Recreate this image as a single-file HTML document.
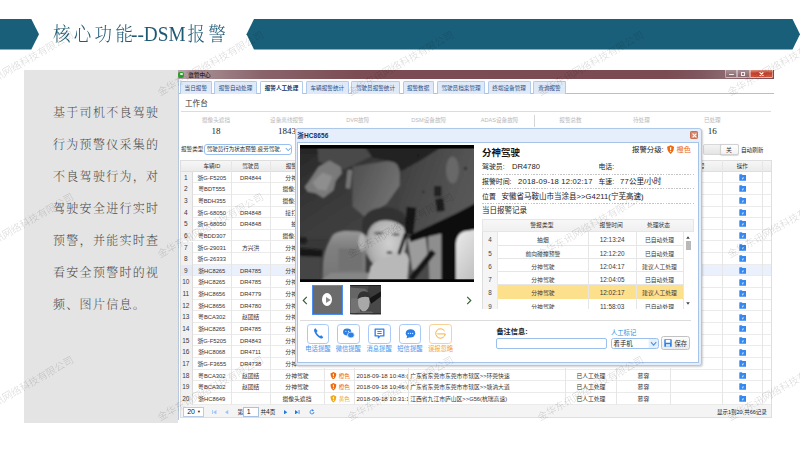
<!DOCTYPE html>
<html lang="zh-CN"><head><meta charset="utf-8"><title>核心功能--DSM报警</title>
<style>
html,body{margin:0;padding:0;background:#fff;}
body{width:800px;height:450px;overflow:hidden;}
#slide{position:relative;width:800px;height:450px;overflow:hidden;background:#fff;font-family:"Liberation Sans","Noto Sans CJK SC",sans-serif;}
#slide div,#slide span,#slide svg{position:absolute;box-sizing:border-box;}
.t{white-space:nowrap;line-height:1;}
.c{text-align:center;}
.ser{font-family:"Liberation Serif","Noto Serif CJK SC",serif;}
.tab{top:81px;height:12.6px;background:#dfe9f7;border:0.6px solid #b3cbeb;border-bottom:none;border-radius:1.5px 1.5px 0 0;color:#2b4f86;font-size:5.6px;line-height:12px;text-align:center;white-space:nowrap;}
.tab.on{background:#fff;color:#16305e;font-weight:bold;height:13.2px;}
.sl{top:116.5px;font-size:5.6px;color:#b9b9b9;width:60px;text-align:center;white-space:nowrap;line-height:6px;}
.sv{top:126.6px;font-size:9px;color:#1a1a1a;width:60px;text-align:center;white-space:nowrap;line-height:9px;font-family:"Liberation Serif",serif;}
.row{left:180px;width:591.7px;height:11.65px;border-bottom:0.6px solid #ebebeb;background:#fff;}
.row.hl{background:#eaf1fc;}
.cell{top:0;height:11.65px;line-height:13.2px;font-size:5.8px;color:#333;text-align:center;white-space:nowrap;overflow:hidden;}
.num{left:0;width:12.6px;background:#f1f1f1;border-right:0.6px solid #dcdcdc;font-size:6.5px;color:#3a3a3a;line-height:12.8px;}
.vl{top:159.6px;width:0.6px;height:245px;background:#e6e6e6;}
.dot{left:482px;width:211.6px;height:1px;background:repeating-linear-gradient(to right,#c6c6c6 0,#c6c6c6 1.5px,transparent 1.5px,transparent 2.7px);}
.dt{font-size:7.4px;color:#222;white-space:nowrap;line-height:8px;}
.r2{left:482px;width:199.8px;height:13.25px;border-bottom:0.6px solid #e6e6e6;background:#fff;}
.r2 .cell{height:13.25px;line-height:16.2px;font-size:5.8px;color:#3a3a3a;}
.btn{top:324.2px;width:22.6px;height:19.6px;border:1.1px solid #a9c9f8;border-radius:3.2px;background:#fff;}
.bl{top:344.5px;width:34px;text-align:center;font-size:6.3px;line-height:7px;color:#3f8fe8;white-space:nowrap;}
.wm{font-size:10px;font-weight:300;color:#000;opacity:0.17;white-space:nowrap;line-height:1;transform-origin:0 100%;transform:rotate(-29.5deg);letter-spacing:0;}
</style></head><body><div id="slide">

<svg style="left:0;top:0" width="800" height="60" viewBox="0 0 800 60"><polygon points="0,19 31.3,19 39,34.2 31.3,49.4 0,49.4" fill="#1a5f7a"/><polygon points="246.5,34.2 254,19 792.5,19 800,34.2 792.5,49.4 254,49.4" fill="#1a5f7a"/></svg>
<div class="t ser" style="left:53px;top:22.8px;font-size:17.5px;letter-spacing:3.3px;color:#1f5a75;line-height:24px;font-weight:300;transform:scaleY(1.12);transform-origin:0 50%;">核心功能<span style="position:static;display:inline-block;font-size:19.3px;letter-spacing:0;margin-left:-5.2px;margin-right:1.4px;font-weight:400;">--DSM</span><span style="position:static;font-size:2px;letter-spacing:0;"> </span>报警</div>
<div style="left:24.4px;top:70px;width:154px;height:353.4px;background:#e4e4e4"></div>
<div class="t ser" style="left:53px;top:105.8px;font-size:12px;letter-spacing:1.3px;color:#4c4c4c;line-height:14px;font-weight:300;">基于司机不良驾驶</div>
<div class="t ser" style="left:53px;top:137.8px;font-size:12px;letter-spacing:1.3px;color:#4c4c4c;line-height:14px;font-weight:300;">行为预警仪采集的</div>
<div class="t ser" style="left:53px;top:169.8px;font-size:12px;letter-spacing:1.3px;color:#4c4c4c;line-height:14px;font-weight:300;">不良驾驶行为，对</div>
<div class="t ser" style="left:53px;top:201.8px;font-size:12px;letter-spacing:1.3px;color:#4c4c4c;line-height:14px;font-weight:300;">驾驶安全进行实时</div>
<div class="t ser" style="left:53px;top:233.8px;font-size:12px;letter-spacing:1.3px;color:#4c4c4c;line-height:14px;font-weight:300;">预警，并能实时查</div>
<div class="t ser" style="left:53px;top:265.8px;font-size:12px;letter-spacing:1.3px;color:#4c4c4c;line-height:14px;font-weight:300;">看安全预警时的视</div>
<div class="t ser" style="left:53px;top:297.8px;font-size:12px;letter-spacing:1.3px;color:#4c4c4c;line-height:14px;font-weight:300;">频、图片信息。</div>
<div id="win" style="left:177.5px;top:70.4px;width:596.2px;height:349.6px;background:#fff;border-left:0.6px solid #b8c8dc;"></div>
<div style="left:177.5px;top:70.4px;width:596.2px;height:8.8px;background:linear-gradient(to right,#b8a6aa 0,#a88f95 3%,#8a646b 14%,#7b4c53 30%,#7a4b52 82%,#805860 88%,#8a676e 91.6%,#7a4b52 100%);"></div>
<div style="left:178.4px;top:71.6px;width:6px;height:6px;border-radius:2px;background:#2aa12a;"></div><div style="left:179.6px;top:72.8px;width:3.4px;height:2.6px;border-radius:1px;background:#eaf6ea;"></div>
<div class="t" style="left:188.3px;top:72px;font-size:5.6px;color:#000;line-height:6px;">监管中心</div>
<div style="left:724.5px;top:70.4px;width:12.6px;height:7.8px;background:linear-gradient(#a98f95,#8b666e);border:0.5px solid rgba(255,255,255,0.4);border-top:none;border-radius:0 0 0 1.5px;"></div>
<div style="left:737.3px;top:70.4px;width:12.4px;height:7.8px;background:linear-gradient(#a98f95,#8b666e);border:0.5px solid rgba(255,255,255,0.4);border-top:none;"></div>
<div style="left:749.8px;top:70.4px;width:23.4px;height:7.8px;background:linear-gradient(#dc9382,#c5402c 45%,#d4553c);border:0.5px solid rgba(255,255,255,0.45);border-top:none;border-radius:0 0 1.5px 0;"></div>
<div style="left:728.5px;top:73.8px;width:5px;height:1.7px;background:#f1ecec;border-radius:0.5px;"></div>
<div style="left:741px;top:71.6px;width:4px;height:4px;border:0.9px solid #f1ecec;"></div>
<svg style="left:758.6px;top:71.6px" width="5" height="4.4" viewBox="0 0 5 4.4"><path d="M0.6 0.4 L4.4 4 M4.4 0.4 L0.6 4" stroke="#fff" stroke-width="1.2"/></svg>
<div style="left:178px;top:93.3px;width:595.6px;height:0.7px;background:#a6c2e6;"></div>
<div class="tab" style="left:180.0px;width:31.6px;">当日报警</div>
<div class="tab" style="left:214.0px;width:43.0px;">报警自动处理</div>
<div class="tab on" style="left:260.0px;width:43.0px;">报警人工处理</div>
<div class="tab" style="left:306.0px;width:42.6px;">车辆报警统计</div>
<div class="tab" style="left:351.4px;width:48.2px;">驾驶员报警统计</div>
<div class="tab" style="left:402.6px;width:31.0px;">报警数据</div>
<div class="tab" style="left:437.0px;width:48.0px;">驾驶员档案管理</div>
<div class="tab" style="left:487.6px;width:43.0px;">终端设备管理</div>
<div class="tab" style="left:533.4px;width:32.2px;">查询报警</div>
<div class="t" style="left:185px;top:100px;font-size:7.6px;color:#333;line-height:8px;">工作台</div>
<div style="left:181px;top:111px;width:590px;height:0.7px;background:#dcdcdc;"></div>
<div class="sl" style="left:186.0px;">摄像头遮挡</div><div class="sv" style="left:186.0px;">18</div>
<div class="sl" style="left:256.9px;">设备离线报警</div><div class="sv" style="left:256.9px;">1843</div>
<div class="sl" style="left:327.8px;">DVR故障</div><div class="sv" style="left:327.8px;">0</div>
<div class="sl" style="left:398.7px;">DSM设备故障</div><div class="sv" style="left:398.7px;">0</div>
<div class="sl" style="left:469.6px;">ADAS设备故障</div><div class="sv" style="left:469.6px;">0</div>
<div class="sl" style="left:540.5px;">报警总数</div><div class="sv" style="left:540.5px;">1861</div>
<div class="sl" style="left:611.4px;">待处理</div><div class="sv" style="left:611.4px;">2</div>
<div class="sl" style="left:682.3px;">已处理</div><div class="sv" style="left:682.3px;">16</div>
<div style="left:534.4px;top:115px;width:0.7px;height:12px;background:#d6d6d6;"></div>
<div class="t" style="left:181px;top:146.3px;font-size:5.6px;color:#333;line-height:6px;">报警类型</div>
<div style="left:204.4px;top:144.2px;width:88px;height:10.5px;border:0.7px solid #9cc0ee;border-radius:3px;background:#fff;"></div>
<div class="t" style="left:206.8px;top:146.3px;font-size:5.5px;color:#222;line-height:6px;">驾驶员行为状态预警,疲劳驾驶,</div>
<svg style="left:285.2px;top:147px" width="6.4" height="5.4" viewBox="0 0 6 5"><path d="M0.8 1 L3 3.4 L5.2 1" fill="none" stroke="#4a90e2" stroke-width="0.9"/></svg>
<div style="left:702.5px;top:144.2px;width:36px;height:11.2px;border:0.6px solid #d8d8d8;border-radius:2px;background:linear-gradient(#f4f4f4,#e4e4e4);"></div>
<div class="t c" style="left:719.5px;top:144.2px;width:19px;height:11.2px;border:0.6px solid #d2d2d2;border-radius:2px;background:linear-gradient(#fff,#f2f2f2);font-size:5.8px;line-height:10.6px;color:#333;box-shadow:0 0.5px 1px rgba(0,0,0,0.15);">关</div>
<div class="t" style="left:741px;top:147px;font-size:5.6px;color:#222;line-height:6px;">自动刷新</div>
<div style="left:180px;top:159.6px;width:591.7px;height:12px;background:linear-gradient(#f6f6f6,#ebebeb);border:0.6px solid #dedede;"></div>
<div class="t c" style="left:192.6px;top:162.6px;width:38.4px;font-size:5.6px;line-height:6px;color:#333;">车辆ID</div>
<div class="t c" style="left:231.0px;top:162.6px;width:39.2px;font-size:5.6px;line-height:6px;color:#333;">驾驶员</div>
<div class="t c" style="left:270.2px;top:162.6px;width:53.5px;font-size:5.6px;line-height:6px;color:#333;">报警类型</div>
<div class="t c" style="left:323.7px;top:162.6px;width:30.4px;font-size:5.6px;line-height:6px;color:#333;">报警分级</div>
<div class="t c" style="left:354.1px;top:162.6px;width:53.6px;font-size:5.6px;line-height:6px;color:#333;">报警时间</div>
<div class="t c" style="left:407.7px;top:162.6px;width:157.7px;font-size:5.6px;line-height:6px;color:#333;">位置</div>
<div class="t c" style="left:565.4px;top:162.6px;width:51.0px;font-size:5.6px;line-height:6px;color:#333;">处理状态</div>
<div class="t c" style="left:616.4px;top:162.6px;width:54.0px;font-size:5.6px;line-height:6px;color:#333;">处理人</div>
<div class="t c" style="left:670.4px;top:162.6px;width:51.9px;font-size:5.6px;line-height:6px;color:#333;">流水号</div>
<div class="t c" style="left:722.3px;top:162.6px;width:40.0px;font-size:5.6px;line-height:6px;color:#333;">操作</div>
<div class="row" style="top:171.60px;">
<div class="cell num">1</div>
<div class="cell" style="left:12.6px;width:38.4px;">浙G-F5205</div>
<div class="cell" style="left:51.0px;width:39.2px;">DR4844</div>
<div class="cell" style="left:90.2px;width:53.5px;">分神驾驶</div>
<div class="cell" style="left:143.7px;width:30.4px;color:#ee6a10;text-align:left;padding-left:15px;font-size:5.6px;"><svg style="left:6.3px;top:2.1px" width="6.8" height="7.6" viewBox="0 0 12 15"><path d="M6 0.2 L11.8 2.8 L11.2 7.6 C10.4 11 8.4 13.4 6 14.9 C3.6 13.4 1.6 11 0.8 7.6 L0.2 2.8 Z" fill="#ee6a10"/><rect x="5" y="3.2" width="2" height="5.2" rx="1" fill="#fff"/><circle cx="6" cy="10.6" r="1.1" fill="#fff"/></svg>橙色</div>
<div class="cell" style="left:174.1px;width:53.6px;text-align:left;padding-left:2.4px;font-size:6.1px;line-height:11.4px;">2018-09-18 12:04:17</div>
<div class="cell" style="left:227.7px;width:157.7px;text-align:left;padding-left:2.5px;">安徽省马鞍山市当涂县>>G4211(宁芜高速)</div>
<div class="cell" style="left:385.4px;width:51.0px;">已自动处理</div>
<div class="cell" style="left:436.4px;width:54.0px;"></div>
<svg style="left:558.7px;top:2.2px" width="7.6" height="7" viewBox="0 0 14 13"><path d="M0.5 1.5 Q0.5 0.5 1.5 0.5 H5 L6.5 2 H12.5 Q13.5 2 13.5 3 V11.5 Q13.5 12.5 12.5 12.5 H1.5 Q0.5 12.5 0.5 11.5 Z" fill="#3588f0"/><path d="M5 9.5 L7.5 5.5 L9 7 L7 10 Z" fill="#cfe3fb"/></svg>
</div>
<div class="row" style="top:183.25px;">
<div class="cell num">2</div>
<div class="cell" style="left:12.6px;width:38.4px;">粤BDT555</div>
<div class="cell" style="left:51.0px;width:39.2px;"></div>
<div class="cell" style="left:90.2px;width:53.5px;">摄像头遮挡</div>
<div class="cell" style="left:143.7px;width:30.4px;color:#f0a818;text-align:left;padding-left:15px;font-size:5.6px;"><svg style="left:6.3px;top:2.1px" width="6.8" height="7.6" viewBox="0 0 12 15"><path d="M6 0.2 L11.8 2.8 L11.2 7.6 C10.4 11 8.4 13.4 6 14.9 C3.6 13.4 1.6 11 0.8 7.6 L0.2 2.8 Z" fill="#f0a818"/><rect x="5" y="3.2" width="2" height="5.2" rx="1" fill="#fff"/><circle cx="6" cy="10.6" r="1.1" fill="#fff"/></svg>黄色</div>
<div class="cell" style="left:174.1px;width:53.6px;text-align:left;padding-left:2.4px;font-size:6.1px;line-height:11.4px;">2018-09-18 12:03:51</div>
<div class="cell" style="left:227.7px;width:157.7px;text-align:left;padding-left:2.5px;">广东省东莞市东莞市市辖区>>莞长路</div>
<div class="cell" style="left:385.4px;width:51.0px;">已自动处理</div>
<div class="cell" style="left:436.4px;width:54.0px;"></div>
<svg style="left:558.7px;top:2.2px" width="7.6" height="7" viewBox="0 0 14 13"><path d="M0.5 1.5 Q0.5 0.5 1.5 0.5 H5 L6.5 2 H12.5 Q13.5 2 13.5 3 V11.5 Q13.5 12.5 12.5 12.5 H1.5 Q0.5 12.5 0.5 11.5 Z" fill="#3588f0"/><path d="M5 9.5 L7.5 5.5 L9 7 L7 10 Z" fill="#cfe3fb"/></svg>
</div>
<div class="row" style="top:194.90px;">
<div class="cell num">3</div>
<div class="cell" style="left:12.6px;width:38.4px;">粤BDH355</div>
<div class="cell" style="left:51.0px;width:39.2px;"></div>
<div class="cell" style="left:90.2px;width:53.5px;">摄像头遮挡</div>
<div class="cell" style="left:143.7px;width:30.4px;color:#f0a818;text-align:left;padding-left:15px;font-size:5.6px;"><svg style="left:6.3px;top:2.1px" width="6.8" height="7.6" viewBox="0 0 12 15"><path d="M6 0.2 L11.8 2.8 L11.2 7.6 C10.4 11 8.4 13.4 6 14.9 C3.6 13.4 1.6 11 0.8 7.6 L0.2 2.8 Z" fill="#f0a818"/><rect x="5" y="3.2" width="2" height="5.2" rx="1" fill="#fff"/><circle cx="6" cy="10.6" r="1.1" fill="#fff"/></svg>黄色</div>
<div class="cell" style="left:174.1px;width:53.6px;text-align:left;padding-left:2.4px;font-size:6.1px;line-height:11.4px;">2018-09-18 12:03:20</div>
<div class="cell" style="left:227.7px;width:157.7px;text-align:left;padding-left:2.5px;">广东省东莞市东莞市市辖区>>东部快速</div>
<div class="cell" style="left:385.4px;width:51.0px;">已自动处理</div>
<div class="cell" style="left:436.4px;width:54.0px;"></div>
<svg style="left:558.7px;top:2.2px" width="7.6" height="7" viewBox="0 0 14 13"><path d="M0.5 1.5 Q0.5 0.5 1.5 0.5 H5 L6.5 2 H12.5 Q13.5 2 13.5 3 V11.5 Q13.5 12.5 12.5 12.5 H1.5 Q0.5 12.5 0.5 11.5 Z" fill="#3588f0"/><path d="M5 9.5 L7.5 5.5 L9 7 L7 10 Z" fill="#cfe3fb"/></svg>
</div>
<div class="row" style="top:206.55px;">
<div class="cell num">4</div>
<div class="cell" style="left:12.6px;width:38.4px;">浙G-68050</div>
<div class="cell" style="left:51.0px;width:39.2px;">DR4848</div>
<div class="cell" style="left:90.2px;width:53.5px;">接打电话</div>
<div class="cell" style="left:143.7px;width:30.4px;color:#ee6a10;text-align:left;padding-left:15px;font-size:5.6px;"><svg style="left:6.3px;top:2.1px" width="6.8" height="7.6" viewBox="0 0 12 15"><path d="M6 0.2 L11.8 2.8 L11.2 7.6 C10.4 11 8.4 13.4 6 14.9 C3.6 13.4 1.6 11 0.8 7.6 L0.2 2.8 Z" fill="#ee6a10"/><rect x="5" y="3.2" width="2" height="5.2" rx="1" fill="#fff"/><circle cx="6" cy="10.6" r="1.1" fill="#fff"/></svg>橙色</div>
<div class="cell" style="left:174.1px;width:53.6px;text-align:left;padding-left:2.4px;font-size:6.1px;line-height:11.4px;">2018-09-18 12:02:59</div>
<div class="cell" style="left:227.7px;width:157.7px;text-align:left;padding-left:2.5px;">浙江省金华市婺城区>>G60(沪昆高速)</div>
<div class="cell" style="left:385.4px;width:51.0px;">已自动处理</div>
<div class="cell" style="left:436.4px;width:54.0px;"></div>
<svg style="left:558.7px;top:2.2px" width="7.6" height="7" viewBox="0 0 14 13"><path d="M0.5 1.5 Q0.5 0.5 1.5 0.5 H5 L6.5 2 H12.5 Q13.5 2 13.5 3 V11.5 Q13.5 12.5 12.5 12.5 H1.5 Q0.5 12.5 0.5 11.5 Z" fill="#3588f0"/><path d="M5 9.5 L7.5 5.5 L9 7 L7 10 Z" fill="#cfe3fb"/></svg>
</div>
<div class="row" style="top:218.20px;">
<div class="cell num">5</div>
<div class="cell" style="left:12.6px;width:38.4px;">浙G-68050</div>
<div class="cell" style="left:51.0px;width:39.2px;">DR4848</div>
<div class="cell" style="left:90.2px;width:53.5px;">抽烟</div>
<div class="cell" style="left:143.7px;width:30.4px;color:#f0a818;text-align:left;padding-left:15px;font-size:5.6px;"><svg style="left:6.3px;top:2.1px" width="6.8" height="7.6" viewBox="0 0 12 15"><path d="M6 0.2 L11.8 2.8 L11.2 7.6 C10.4 11 8.4 13.4 6 14.9 C3.6 13.4 1.6 11 0.8 7.6 L0.2 2.8 Z" fill="#f0a818"/><rect x="5" y="3.2" width="2" height="5.2" rx="1" fill="#fff"/><circle cx="6" cy="10.6" r="1.1" fill="#fff"/></svg>黄色</div>
<div class="cell" style="left:174.1px;width:53.6px;text-align:left;padding-left:2.4px;font-size:6.1px;line-height:11.4px;">2018-09-18 12:02:40</div>
<div class="cell" style="left:227.7px;width:157.7px;text-align:left;padding-left:2.5px;">浙江省金华市婺城区>>G60(沪昆高速)</div>
<div class="cell" style="left:385.4px;width:51.0px;">已自动处理</div>
<div class="cell" style="left:436.4px;width:54.0px;"></div>
<svg style="left:558.7px;top:2.2px" width="7.6" height="7" viewBox="0 0 14 13"><path d="M0.5 1.5 Q0.5 0.5 1.5 0.5 H5 L6.5 2 H12.5 Q13.5 2 13.5 3 V11.5 Q13.5 12.5 12.5 12.5 H1.5 Q0.5 12.5 0.5 11.5 Z" fill="#3588f0"/><path d="M5 9.5 L7.5 5.5 L9 7 L7 10 Z" fill="#cfe3fb"/></svg>
</div>
<div class="row" style="top:229.85px;">
<div class="cell num">6</div>
<div class="cell" style="left:12.6px;width:38.4px;">粤BDD307</div>
<div class="cell" style="left:51.0px;width:39.2px;"></div>
<div class="cell" style="left:90.2px;width:53.5px;">摄像头遮挡</div>
<div class="cell" style="left:143.7px;width:30.4px;color:#f0a818;text-align:left;padding-left:15px;font-size:5.6px;"><svg style="left:6.3px;top:2.1px" width="6.8" height="7.6" viewBox="0 0 12 15"><path d="M6 0.2 L11.8 2.8 L11.2 7.6 C10.4 11 8.4 13.4 6 14.9 C3.6 13.4 1.6 11 0.8 7.6 L0.2 2.8 Z" fill="#f0a818"/><rect x="5" y="3.2" width="2" height="5.2" rx="1" fill="#fff"/><circle cx="6" cy="10.6" r="1.1" fill="#fff"/></svg>黄色</div>
<div class="cell" style="left:174.1px;width:53.6px;text-align:left;padding-left:2.4px;font-size:6.1px;line-height:11.4px;">2018-09-18 12:02:31</div>
<div class="cell" style="left:227.7px;width:157.7px;text-align:left;padding-left:2.5px;">广东省东莞市东莞市市辖区>>松山湖大道</div>
<div class="cell" style="left:385.4px;width:51.0px;">已自动处理</div>
<div class="cell" style="left:436.4px;width:54.0px;"></div>
<svg style="left:558.7px;top:2.2px" width="7.6" height="7" viewBox="0 0 14 13"><path d="M0.5 1.5 Q0.5 0.5 1.5 0.5 H5 L6.5 2 H12.5 Q13.5 2 13.5 3 V11.5 Q13.5 12.5 12.5 12.5 H1.5 Q0.5 12.5 0.5 11.5 Z" fill="#3588f0"/><path d="M5 9.5 L7.5 5.5 L9 7 L7 10 Z" fill="#cfe3fb"/></svg>
</div>
<div class="row" style="top:241.50px;">
<div class="cell num">7</div>
<div class="cell" style="left:12.6px;width:38.4px;">浙G-29031</div>
<div class="cell" style="left:51.0px;width:39.2px;">方兴洪</div>
<div class="cell" style="left:90.2px;width:53.5px;">分神驾驶</div>
<div class="cell" style="left:143.7px;width:30.4px;color:#ee6a10;text-align:left;padding-left:15px;font-size:5.6px;"><svg style="left:6.3px;top:2.1px" width="6.8" height="7.6" viewBox="0 0 12 15"><path d="M6 0.2 L11.8 2.8 L11.2 7.6 C10.4 11 8.4 13.4 6 14.9 C3.6 13.4 1.6 11 0.8 7.6 L0.2 2.8 Z" fill="#ee6a10"/><rect x="5" y="3.2" width="2" height="5.2" rx="1" fill="#fff"/><circle cx="6" cy="10.6" r="1.1" fill="#fff"/></svg>橙色</div>
<div class="cell" style="left:174.1px;width:53.6px;text-align:left;padding-left:2.4px;font-size:6.1px;line-height:11.4px;">2018-09-18 12:02:25</div>
<div class="cell" style="left:227.7px;width:157.7px;text-align:left;padding-left:2.5px;">浙江省金华市金东区>>G60(沪昆高速)</div>
<div class="cell" style="left:385.4px;width:51.0px;">已自动处理</div>
<div class="cell" style="left:436.4px;width:54.0px;"></div>
<svg style="left:558.7px;top:2.2px" width="7.6" height="7" viewBox="0 0 14 13"><path d="M0.5 1.5 Q0.5 0.5 1.5 0.5 H5 L6.5 2 H12.5 Q13.5 2 13.5 3 V11.5 Q13.5 12.5 12.5 12.5 H1.5 Q0.5 12.5 0.5 11.5 Z" fill="#3588f0"/><path d="M5 9.5 L7.5 5.5 L9 7 L7 10 Z" fill="#cfe3fb"/></svg>
</div>
<div class="row" style="top:253.15px;">
<div class="cell num">8</div>
<div class="cell" style="left:12.6px;width:38.4px;">浙G-26333</div>
<div class="cell" style="left:51.0px;width:39.2px;"></div>
<div class="cell" style="left:90.2px;width:53.5px;">分神驾驶</div>
<div class="cell" style="left:143.7px;width:30.4px;color:#ee6a10;text-align:left;padding-left:15px;font-size:5.6px;"><svg style="left:6.3px;top:2.1px" width="6.8" height="7.6" viewBox="0 0 12 15"><path d="M6 0.2 L11.8 2.8 L11.2 7.6 C10.4 11 8.4 13.4 6 14.9 C3.6 13.4 1.6 11 0.8 7.6 L0.2 2.8 Z" fill="#ee6a10"/><rect x="5" y="3.2" width="2" height="5.2" rx="1" fill="#fff"/><circle cx="6" cy="10.6" r="1.1" fill="#fff"/></svg>橙色</div>
<div class="cell" style="left:174.1px;width:53.6px;text-align:left;padding-left:2.4px;font-size:6.1px;line-height:11.4px;">2018-09-18 12:02:20</div>
<div class="cell" style="left:227.7px;width:157.7px;text-align:left;padding-left:2.5px;">浙江省金华市义乌市>>G60(沪昆高速)</div>
<div class="cell" style="left:385.4px;width:51.0px;">已自动处理</div>
<div class="cell" style="left:436.4px;width:54.0px;"></div>
<svg style="left:558.7px;top:2.2px" width="7.6" height="7" viewBox="0 0 14 13"><path d="M0.5 1.5 Q0.5 0.5 1.5 0.5 H5 L6.5 2 H12.5 Q13.5 2 13.5 3 V11.5 Q13.5 12.5 12.5 12.5 H1.5 Q0.5 12.5 0.5 11.5 Z" fill="#3588f0"/><path d="M5 9.5 L7.5 5.5 L9 7 L7 10 Z" fill="#cfe3fb"/></svg>
</div>
<div class="row hl" style="top:264.80px;">
<div class="cell num" style="background:#e3eaf5">9</div>
<div class="cell" style="left:12.6px;width:38.4px;">浙HC8265</div>
<div class="cell" style="left:51.0px;width:39.2px;">DR4785</div>
<div class="cell" style="left:90.2px;width:53.5px;">分神驾驶</div>
<div class="cell" style="left:143.7px;width:30.4px;color:#ee6a10;text-align:left;padding-left:15px;font-size:5.6px;"><svg style="left:6.3px;top:2.1px" width="6.8" height="7.6" viewBox="0 0 12 15"><path d="M6 0.2 L11.8 2.8 L11.2 7.6 C10.4 11 8.4 13.4 6 14.9 C3.6 13.4 1.6 11 0.8 7.6 L0.2 2.8 Z" fill="#ee6a10"/><rect x="5" y="3.2" width="2" height="5.2" rx="1" fill="#fff"/><circle cx="6" cy="10.6" r="1.1" fill="#fff"/></svg>橙色</div>
<div class="cell" style="left:174.1px;width:53.6px;text-align:left;padding-left:2.4px;font-size:6.1px;line-height:11.4px;">2018-09-18 12:02:18</div>
<div class="cell" style="left:227.7px;width:157.7px;text-align:left;padding-left:2.5px;">安徽省芜湖市芜湖县>>G4211(宁芜高速)</div>
<div class="cell" style="left:385.4px;width:51.0px;">建议人工处理</div>
<div class="cell" style="left:436.4px;width:54.0px;"></div>
<svg style="left:558.7px;top:2.2px" width="7.6" height="7" viewBox="0 0 14 13"><path d="M0.5 1.5 Q0.5 0.5 1.5 0.5 H5 L6.5 2 H12.5 Q13.5 2 13.5 3 V11.5 Q13.5 12.5 12.5 12.5 H1.5 Q0.5 12.5 0.5 11.5 Z" fill="#3588f0"/><path d="M5 9.5 L7.5 5.5 L9 7 L7 10 Z" fill="#cfe3fb"/></svg>
</div>
<div class="row" style="top:276.45px;">
<div class="cell num">10</div>
<div class="cell" style="left:12.6px;width:38.4px;">浙HC8265</div>
<div class="cell" style="left:51.0px;width:39.2px;">DR4785</div>
<div class="cell" style="left:90.2px;width:53.5px;">分神驾驶</div>
<div class="cell" style="left:143.7px;width:30.4px;color:#ee6a10;text-align:left;padding-left:15px;font-size:5.6px;"><svg style="left:6.3px;top:2.1px" width="6.8" height="7.6" viewBox="0 0 12 15"><path d="M6 0.2 L11.8 2.8 L11.2 7.6 C10.4 11 8.4 13.4 6 14.9 C3.6 13.4 1.6 11 0.8 7.6 L0.2 2.8 Z" fill="#ee6a10"/><rect x="5" y="3.2" width="2" height="5.2" rx="1" fill="#fff"/><circle cx="6" cy="10.6" r="1.1" fill="#fff"/></svg>橙色</div>
<div class="cell" style="left:174.1px;width:53.6px;text-align:left;padding-left:2.4px;font-size:6.1px;line-height:11.4px;">2018-09-18 12:02:17</div>
<div class="cell" style="left:227.7px;width:157.7px;text-align:left;padding-left:2.5px;">安徽省芜湖市芜湖县>>G4211(宁芜高速)</div>
<div class="cell" style="left:385.4px;width:51.0px;">已自动处理</div>
<div class="cell" style="left:436.4px;width:54.0px;"></div>
<svg style="left:558.7px;top:2.2px" width="7.6" height="7" viewBox="0 0 14 13"><path d="M0.5 1.5 Q0.5 0.5 1.5 0.5 H5 L6.5 2 H12.5 Q13.5 2 13.5 3 V11.5 Q13.5 12.5 12.5 12.5 H1.5 Q0.5 12.5 0.5 11.5 Z" fill="#3588f0"/><path d="M5 9.5 L7.5 5.5 L9 7 L7 10 Z" fill="#cfe3fb"/></svg>
</div>
<div class="row" style="top:288.10px;">
<div class="cell num">11</div>
<div class="cell" style="left:12.6px;width:38.4px;">浙HC8656</div>
<div class="cell" style="left:51.0px;width:39.2px;">DR4779</div>
<div class="cell" style="left:90.2px;width:53.5px;">分神驾驶</div>
<div class="cell" style="left:143.7px;width:30.4px;color:#ee6a10;text-align:left;padding-left:15px;font-size:5.6px;"><svg style="left:6.3px;top:2.1px" width="6.8" height="7.6" viewBox="0 0 12 15"><path d="M6 0.2 L11.8 2.8 L11.2 7.6 C10.4 11 8.4 13.4 6 14.9 C3.6 13.4 1.6 11 0.8 7.6 L0.2 2.8 Z" fill="#ee6a10"/><rect x="5" y="3.2" width="2" height="5.2" rx="1" fill="#fff"/><circle cx="6" cy="10.6" r="1.1" fill="#fff"/></svg>橙色</div>
<div class="cell" style="left:174.1px;width:53.6px;text-align:left;padding-left:2.4px;font-size:6.1px;line-height:11.4px;">2018-09-18 12:02:17</div>
<div class="cell" style="left:227.7px;width:157.7px;text-align:left;padding-left:2.5px;">安徽省马鞍山市当涂县>>G4211(宁芜高速)</div>
<div class="cell" style="left:385.4px;width:51.0px;">建议人工处理</div>
<div class="cell" style="left:436.4px;width:54.0px;"></div>
<svg style="left:558.7px;top:2.2px" width="7.6" height="7" viewBox="0 0 14 13"><path d="M0.5 1.5 Q0.5 0.5 1.5 0.5 H5 L6.5 2 H12.5 Q13.5 2 13.5 3 V11.5 Q13.5 12.5 12.5 12.5 H1.5 Q0.5 12.5 0.5 11.5 Z" fill="#3588f0"/><path d="M5 9.5 L7.5 5.5 L9 7 L7 10 Z" fill="#cfe3fb"/></svg>
</div>
<div class="row" style="top:299.75px;">
<div class="cell num">12</div>
<div class="cell" style="left:12.6px;width:38.4px;">浙HC8656</div>
<div class="cell" style="left:51.0px;width:39.2px;">DR4780</div>
<div class="cell" style="left:90.2px;width:53.5px;">分神驾驶</div>
<div class="cell" style="left:143.7px;width:30.4px;color:#ee6a10;text-align:left;padding-left:15px;font-size:5.6px;"><svg style="left:6.3px;top:2.1px" width="6.8" height="7.6" viewBox="0 0 12 15"><path d="M6 0.2 L11.8 2.8 L11.2 7.6 C10.4 11 8.4 13.4 6 14.9 C3.6 13.4 1.6 11 0.8 7.6 L0.2 2.8 Z" fill="#ee6a10"/><rect x="5" y="3.2" width="2" height="5.2" rx="1" fill="#fff"/><circle cx="6" cy="10.6" r="1.1" fill="#fff"/></svg>橙色</div>
<div class="cell" style="left:174.1px;width:53.6px;text-align:left;padding-left:2.4px;font-size:6.1px;line-height:11.4px;">2018-09-18 12:02:17</div>
<div class="cell" style="left:227.7px;width:157.7px;text-align:left;padding-left:2.5px;">安徽省马鞍山市当涂县>>G4211(宁芜高速)</div>
<div class="cell" style="left:385.4px;width:51.0px;">建议人工处理</div>
<div class="cell" style="left:436.4px;width:54.0px;"></div>
<svg style="left:558.7px;top:2.2px" width="7.6" height="7" viewBox="0 0 14 13"><path d="M0.5 1.5 Q0.5 0.5 1.5 0.5 H5 L6.5 2 H12.5 Q13.5 2 13.5 3 V11.5 Q13.5 12.5 12.5 12.5 H1.5 Q0.5 12.5 0.5 11.5 Z" fill="#3588f0"/><path d="M5 9.5 L7.5 5.5 L9 7 L7 10 Z" fill="#cfe3fb"/></svg>
</div>
<div class="row" style="top:311.40px;">
<div class="cell num">13</div>
<div class="cell" style="left:12.6px;width:38.4px;">粤BCA302</div>
<div class="cell" style="left:51.0px;width:39.2px;">赵团结</div>
<div class="cell" style="left:90.2px;width:53.5px;">分神驾驶</div>
<div class="cell" style="left:143.7px;width:30.4px;color:#ee6a10;text-align:left;padding-left:15px;font-size:5.6px;"><svg style="left:6.3px;top:2.1px" width="6.8" height="7.6" viewBox="0 0 12 15"><path d="M6 0.2 L11.8 2.8 L11.2 7.6 C10.4 11 8.4 13.4 6 14.9 C3.6 13.4 1.6 11 0.8 7.6 L0.2 2.8 Z" fill="#ee6a10"/><rect x="5" y="3.2" width="2" height="5.2" rx="1" fill="#fff"/><circle cx="6" cy="10.6" r="1.1" fill="#fff"/></svg>橙色</div>
<div class="cell" style="left:174.1px;width:53.6px;text-align:left;padding-left:2.4px;font-size:6.1px;line-height:11.4px;">2018-09-18 11:58:40</div>
<div class="cell" style="left:227.7px;width:157.7px;text-align:left;padding-left:2.5px;">广东省东莞市东莞市市辖区>>环莞快速</div>
<div class="cell" style="left:385.4px;width:51.0px;">已人工处理</div>
<div class="cell" style="left:436.4px;width:54.0px;">慕容</div>
<svg style="left:558.7px;top:2.2px" width="7.6" height="7" viewBox="0 0 14 13"><path d="M0.5 1.5 Q0.5 0.5 1.5 0.5 H5 L6.5 2 H12.5 Q13.5 2 13.5 3 V11.5 Q13.5 12.5 12.5 12.5 H1.5 Q0.5 12.5 0.5 11.5 Z" fill="#3588f0"/><path d="M5 9.5 L7.5 5.5 L9 7 L7 10 Z" fill="#cfe3fb"/></svg>
</div>
<div class="row" style="top:323.05px;">
<div class="cell num">14</div>
<div class="cell" style="left:12.6px;width:38.4px;">浙HC8265</div>
<div class="cell" style="left:51.0px;width:39.2px;">DR4785</div>
<div class="cell" style="left:90.2px;width:53.5px;">分神驾驶</div>
<div class="cell" style="left:143.7px;width:30.4px;color:#ee6a10;text-align:left;padding-left:15px;font-size:5.6px;"><svg style="left:6.3px;top:2.1px" width="6.8" height="7.6" viewBox="0 0 12 15"><path d="M6 0.2 L11.8 2.8 L11.2 7.6 C10.4 11 8.4 13.4 6 14.9 C3.6 13.4 1.6 11 0.8 7.6 L0.2 2.8 Z" fill="#ee6a10"/><rect x="5" y="3.2" width="2" height="5.2" rx="1" fill="#fff"/><circle cx="6" cy="10.6" r="1.1" fill="#fff"/></svg>橙色</div>
<div class="cell" style="left:174.1px;width:53.6px;text-align:left;padding-left:2.4px;font-size:6.1px;line-height:11.4px;">2018-09-18 11:58:03</div>
<div class="cell" style="left:227.7px;width:157.7px;text-align:left;padding-left:2.5px;">安徽省芜湖市芜湖县>>G4211(宁芜高速)</div>
<div class="cell" style="left:385.4px;width:51.0px;">已自动处理</div>
<div class="cell" style="left:436.4px;width:54.0px;"></div>
<svg style="left:558.7px;top:2.2px" width="7.6" height="7" viewBox="0 0 14 13"><path d="M0.5 1.5 Q0.5 0.5 1.5 0.5 H5 L6.5 2 H12.5 Q13.5 2 13.5 3 V11.5 Q13.5 12.5 12.5 12.5 H1.5 Q0.5 12.5 0.5 11.5 Z" fill="#3588f0"/><path d="M5 9.5 L7.5 5.5 L9 7 L7 10 Z" fill="#cfe3fb"/></svg>
</div>
<div class="row" style="top:334.70px;">
<div class="cell num">15</div>
<div class="cell" style="left:12.6px;width:38.4px;">浙G-F5205</div>
<div class="cell" style="left:51.0px;width:39.2px;">DR4843</div>
<div class="cell" style="left:90.2px;width:53.5px;">分神驾驶</div>
<div class="cell" style="left:143.7px;width:30.4px;color:#ee6a10;text-align:left;padding-left:15px;font-size:5.6px;"><svg style="left:6.3px;top:2.1px" width="6.8" height="7.6" viewBox="0 0 12 15"><path d="M6 0.2 L11.8 2.8 L11.2 7.6 C10.4 11 8.4 13.4 6 14.9 C3.6 13.4 1.6 11 0.8 7.6 L0.2 2.8 Z" fill="#ee6a10"/><rect x="5" y="3.2" width="2" height="5.2" rx="1" fill="#fff"/><circle cx="6" cy="10.6" r="1.1" fill="#fff"/></svg>橙色</div>
<div class="cell" style="left:174.1px;width:53.6px;text-align:left;padding-left:2.4px;font-size:6.1px;line-height:11.4px;">2018-09-18 11:40:12</div>
<div class="cell" style="left:227.7px;width:157.7px;text-align:left;padding-left:2.5px;">浙江省金华市婺城区>>G60(沪昆高速)</div>
<div class="cell" style="left:385.4px;width:51.0px;">已自动处理</div>
<div class="cell" style="left:436.4px;width:54.0px;"></div>
<svg style="left:558.7px;top:2.2px" width="7.6" height="7" viewBox="0 0 14 13"><path d="M0.5 1.5 Q0.5 0.5 1.5 0.5 H5 L6.5 2 H12.5 Q13.5 2 13.5 3 V11.5 Q13.5 12.5 12.5 12.5 H1.5 Q0.5 12.5 0.5 11.5 Z" fill="#3588f0"/><path d="M5 9.5 L7.5 5.5 L9 7 L7 10 Z" fill="#cfe3fb"/></svg>
</div>
<div class="row" style="top:346.35px;">
<div class="cell num">16</div>
<div class="cell" style="left:12.6px;width:38.4px;">浙HC8068</div>
<div class="cell" style="left:51.0px;width:39.2px;">DR4711</div>
<div class="cell" style="left:90.2px;width:53.5px;">分神驾驶</div>
<div class="cell" style="left:143.7px;width:30.4px;color:#ee6a10;text-align:left;padding-left:15px;font-size:5.6px;"><svg style="left:6.3px;top:2.1px" width="6.8" height="7.6" viewBox="0 0 12 15"><path d="M6 0.2 L11.8 2.8 L11.2 7.6 C10.4 11 8.4 13.4 6 14.9 C3.6 13.4 1.6 11 0.8 7.6 L0.2 2.8 Z" fill="#ee6a10"/><rect x="5" y="3.2" width="2" height="5.2" rx="1" fill="#fff"/><circle cx="6" cy="10.6" r="1.1" fill="#fff"/></svg>橙色</div>
<div class="cell" style="left:174.1px;width:53.6px;text-align:left;padding-left:2.4px;font-size:6.1px;line-height:11.4px;">2018-09-18 11:20:45</div>
<div class="cell" style="left:227.7px;width:157.7px;text-align:left;padding-left:2.5px;">浙江省杭州市萧山区>>G60(沪昆高速)</div>
<div class="cell" style="left:385.4px;width:51.0px;">已自动处理</div>
<div class="cell" style="left:436.4px;width:54.0px;"></div>
<svg style="left:558.7px;top:2.2px" width="7.6" height="7" viewBox="0 0 14 13"><path d="M0.5 1.5 Q0.5 0.5 1.5 0.5 H5 L6.5 2 H12.5 Q13.5 2 13.5 3 V11.5 Q13.5 12.5 12.5 12.5 H1.5 Q0.5 12.5 0.5 11.5 Z" fill="#3588f0"/><path d="M5 9.5 L7.5 5.5 L9 7 L7 10 Z" fill="#cfe3fb"/></svg>
</div>
<div class="row" style="top:358.00px;">
<div class="cell num">17</div>
<div class="cell" style="left:12.6px;width:38.4px;">浙G-F3655</div>
<div class="cell" style="left:51.0px;width:39.2px;">DR4738</div>
<div class="cell" style="left:90.2px;width:53.5px;">分神驾驶</div>
<div class="cell" style="left:143.7px;width:30.4px;color:#ee6a10;text-align:left;padding-left:15px;font-size:5.6px;"><svg style="left:6.3px;top:2.1px" width="6.8" height="7.6" viewBox="0 0 12 15"><path d="M6 0.2 L11.8 2.8 L11.2 7.6 C10.4 11 8.4 13.4 6 14.9 C3.6 13.4 1.6 11 0.8 7.6 L0.2 2.8 Z" fill="#ee6a10"/><rect x="5" y="3.2" width="2" height="5.2" rx="1" fill="#fff"/><circle cx="6" cy="10.6" r="1.1" fill="#fff"/></svg>橙色</div>
<div class="cell" style="left:174.1px;width:53.6px;text-align:left;padding-left:2.4px;font-size:6.1px;line-height:11.4px;">2018-09-18 11:02:33</div>
<div class="cell" style="left:227.7px;width:157.7px;text-align:left;padding-left:2.5px;">浙江省金华市兰溪市>>G60(沪昆高速)</div>
<div class="cell" style="left:385.4px;width:51.0px;">已自动处理</div>
<div class="cell" style="left:436.4px;width:54.0px;"></div>
<svg style="left:558.7px;top:2.2px" width="7.6" height="7" viewBox="0 0 14 13"><path d="M0.5 1.5 Q0.5 0.5 1.5 0.5 H5 L6.5 2 H12.5 Q13.5 2 13.5 3 V11.5 Q13.5 12.5 12.5 12.5 H1.5 Q0.5 12.5 0.5 11.5 Z" fill="#3588f0"/><path d="M5 9.5 L7.5 5.5 L9 7 L7 10 Z" fill="#cfe3fb"/></svg>
</div>
<div class="row" style="top:369.65px;">
<div class="cell num">18</div>
<div class="cell" style="left:12.6px;width:38.4px;">粤BCA302</div>
<div class="cell" style="left:51.0px;width:39.2px;">赵团结</div>
<div class="cell" style="left:90.2px;width:53.5px;">分神驾驶</div>
<div class="cell" style="left:143.7px;width:30.4px;color:#ee6a10;text-align:left;padding-left:15px;font-size:5.6px;"><svg style="left:6.3px;top:2.1px" width="6.8" height="7.6" viewBox="0 0 12 15"><path d="M6 0.2 L11.8 2.8 L11.2 7.6 C10.4 11 8.4 13.4 6 14.9 C3.6 13.4 1.6 11 0.8 7.6 L0.2 2.8 Z" fill="#ee6a10"/><rect x="5" y="3.2" width="2" height="5.2" rx="1" fill="#fff"/><circle cx="6" cy="10.6" r="1.1" fill="#fff"/></svg>橙色</div>
<div class="cell" style="left:174.1px;width:53.6px;text-align:left;padding-left:2.4px;font-size:6.1px;line-height:11.4px;">2018-09-18 10:48:(</div>
<div class="cell" style="left:227.7px;width:157.7px;text-align:left;padding-left:2.5px;">广东省东莞市东莞市市辖区>>环莞快速</div>
<div class="cell" style="left:385.4px;width:51.0px;">已人工处理</div>
<div class="cell" style="left:436.4px;width:54.0px;">慕容</div>
<svg style="left:558.7px;top:2.2px" width="7.6" height="7" viewBox="0 0 14 13"><path d="M0.5 1.5 Q0.5 0.5 1.5 0.5 H5 L6.5 2 H12.5 Q13.5 2 13.5 3 V11.5 Q13.5 12.5 12.5 12.5 H1.5 Q0.5 12.5 0.5 11.5 Z" fill="#3588f0"/><path d="M5 9.5 L7.5 5.5 L9 7 L7 10 Z" fill="#cfe3fb"/></svg>
</div>
<div class="row" style="top:381.30px;">
<div class="cell num">19</div>
<div class="cell" style="left:12.6px;width:38.4px;">粤BCA302</div>
<div class="cell" style="left:51.0px;width:39.2px;">赵团结</div>
<div class="cell" style="left:90.2px;width:53.5px;">分神驾驶</div>
<div class="cell" style="left:143.7px;width:30.4px;color:#ee6a10;text-align:left;padding-left:15px;font-size:5.6px;"><svg style="left:6.3px;top:2.1px" width="6.8" height="7.6" viewBox="0 0 12 15"><path d="M6 0.2 L11.8 2.8 L11.2 7.6 C10.4 11 8.4 13.4 6 14.9 C3.6 13.4 1.6 11 0.8 7.6 L0.2 2.8 Z" fill="#ee6a10"/><rect x="5" y="3.2" width="2" height="5.2" rx="1" fill="#fff"/><circle cx="6" cy="10.6" r="1.1" fill="#fff"/></svg>橙色</div>
<div class="cell" style="left:174.1px;width:53.6px;text-align:left;padding-left:2.4px;font-size:6.1px;line-height:11.4px;">2018-09-18 10:46:(</div>
<div class="cell" style="left:227.7px;width:157.7px;text-align:left;padding-left:2.5px;">广东省东莞市东莞市市辖区>>塘汭大道</div>
<div class="cell" style="left:385.4px;width:51.0px;">已人工处理</div>
<div class="cell" style="left:436.4px;width:54.0px;">慕容</div>
<svg style="left:558.7px;top:2.2px" width="7.6" height="7" viewBox="0 0 14 13"><path d="M0.5 1.5 Q0.5 0.5 1.5 0.5 H5 L6.5 2 H12.5 Q13.5 2 13.5 3 V11.5 Q13.5 12.5 12.5 12.5 H1.5 Q0.5 12.5 0.5 11.5 Z" fill="#3588f0"/><path d="M5 9.5 L7.5 5.5 L9 7 L7 10 Z" fill="#cfe3fb"/></svg>
</div>
<div class="row" style="top:392.95px;">
<div class="cell num">20</div>
<div class="cell" style="left:12.6px;width:38.4px;">浙HC8649</div>
<div class="cell" style="left:51.0px;width:39.2px;"></div>
<div class="cell" style="left:90.2px;width:53.5px;">摄像头遮挡</div>
<div class="cell" style="left:143.7px;width:30.4px;color:#f0a818;text-align:left;padding-left:15px;font-size:5.6px;"><svg style="left:6.3px;top:2.1px" width="6.8" height="7.6" viewBox="0 0 12 15"><path d="M6 0.2 L11.8 2.8 L11.2 7.6 C10.4 11 8.4 13.4 6 14.9 C3.6 13.4 1.6 11 0.8 7.6 L0.2 2.8 Z" fill="#f0a818"/><rect x="5" y="3.2" width="2" height="5.2" rx="1" fill="#fff"/><circle cx="6" cy="10.6" r="1.1" fill="#fff"/></svg>黄色</div>
<div class="cell" style="left:174.1px;width:53.6px;text-align:left;padding-left:2.4px;font-size:6.1px;line-height:11.4px;">2018-09-18 10:31:1</div>
<div class="cell" style="left:227.7px;width:157.7px;text-align:left;padding-left:2.5px;">江西省九江市庐山区>>G56(杭瑞高速)</div>
<div class="cell" style="left:385.4px;width:51.0px;">已人工处理</div>
<div class="cell" style="left:436.4px;width:54.0px;">慕容</div>
<svg style="left:558.7px;top:2.2px" width="7.6" height="7" viewBox="0 0 14 13"><path d="M0.5 1.5 Q0.5 0.5 1.5 0.5 H5 L6.5 2 H12.5 Q13.5 2 13.5 3 V11.5 Q13.5 12.5 12.5 12.5 H1.5 Q0.5 12.5 0.5 11.5 Z" fill="#3588f0"/><path d="M5 9.5 L7.5 5.5 L9 7 L7 10 Z" fill="#cfe3fb"/></svg>
</div>
<div class="vl" style="left:231.0px;"></div>
<div class="vl" style="left:270.2px;"></div>
<div class="vl" style="left:323.7px;"></div>
<div class="vl" style="left:354.1px;"></div>
<div class="vl" style="left:407.7px;"></div>
<div class="vl" style="left:565.4px;"></div>
<div class="vl" style="left:616.4px;"></div>
<div class="vl" style="left:670.4px;"></div>
<div class="vl" style="left:722.3px;"></div>
<div class="vl" style="left:762.3px;"></div>
<div style="left:180px;top:159.6px;width:0.6px;height:245px;background:#dedede;"></div><div style="left:771.2px;top:159.6px;width:0.6px;height:245px;background:#dedede;"></div>
<div style="left:180px;top:404.6px;width:591.7px;height:13.6px;background:#f4f4f4;border:0.6px solid #dedede;border-top:none;"></div>
<div class="t" style="left:183.2px;top:407px;width:20.6px;height:9.7px;border:0.6px solid #b9cde6;background:#fff;font-size:7px;line-height:8.6px;padding-left:3px;color:#111;">20 <span style="position:static;font-size:3.8px;vertical-align:1px;">▼</span></div>
<svg style="left:212.0px;top:409.9px" width="5.2" height="4.5" viewBox="0 0 7 6"><rect x="0" y="0" width="1.1" height="6" fill="#9cc4f4"/><polygon points="1.6,3 6,0 6,6" fill="#9cc4f4"/></svg>
<svg style="left:224.8px;top:409.9px" width="5.2" height="4.5" viewBox="0 0 7 6"><polygon points="0,3 4.4,0 4.4,6" fill="#9cc4f4"/></svg>
<div class="t" style="left:237.6px;top:409px;font-size:5.6px;line-height:6px;color:#222;">第</div>
<div class="t" style="left:243.2px;top:407px;width:15.5px;height:9.7px;border:0.6px solid #a9c2e2;background:#fff;font-size:7px;line-height:8.6px;padding-left:2.5px;color:#111;">1</div>
<div class="t" style="left:260.5px;top:409px;font-size:5.6px;line-height:6px;color:#222;">共<span style="position:static;font-size:6.6px">4</span>页</div>
<svg style="left:284.0px;top:409.9px" width="5.2" height="4.5" viewBox="0 0 7 6"><polygon points="4.4,3 0,0 0,6" fill="#1f7ae0"/></svg>
<svg style="left:295.4px;top:409.9px" width="5.2" height="4.5" viewBox="0 0 7 6"><polygon points="4.4,3 0,0 0,6" fill="#1f7ae0"/><rect x="4.9" y="0" width="1.1" height="6" fill="#1f7ae0"/></svg>
<svg style="left:308.6px;top:408.8px" width="6" height="6" viewBox="0 0 14 14"><path d="M11.5 7 A4.5 4.5 0 1 1 9 3" fill="none" stroke="#2d7fe6" stroke-width="2"/><polygon points="7.5,0.5 12,3 7.5,5.8" fill="#2d7fe6"/></svg>
<div class="t" style="left:717px;top:408.8px;font-size:5.5px;line-height:6px;color:#222;">显示1到20,共66记录</div>
<div style="left:296px;top:365.5px;width:405px;height:2.4px;background:#fff;"></div>
<div style="left:294.6px;top:127.5px;width:407.4px;height:238.2px;background:#e6eefb;border:0.7px solid #aec8ea;border-radius:3px;box-shadow:1px 1px 2px rgba(0,0,0,0.18);"></div>
<div style="left:297.4px;top:142px;width:401.5px;height:220.8px;background:#fff;border:0.6px solid #a8c3e8;"></div>
<div class="t" style="left:297.3px;top:131.8px;font-size:6.5px;font-weight:bold;color:#1a2f5c;line-height:7px;letter-spacing:0.1px;">浙HC8656</div>
<div style="left:690px;top:131.2px;width:8.2px;height:7.8px;background:#d8896c;border:0.6px solid #c8704f;border-radius:1.2px;"></div>
<svg style="left:691.6px;top:132.6px" width="5" height="5" viewBox="0 0 5 5"><path d="M0.6 0.6 L4.4 4.4 M4.4 0.6 L0.6 4.4" stroke="#fff" stroke-width="1.1"/></svg>
<svg style="left:299.5px;top:144.5px" width="174.6" height="137.4" viewBox="299.5 144.5 174.6 137.4">
<defs>
<filter id="vb" x="-5%" y="-5%" width="110%" height="110%"><feGaussianBlur stdDeviation="0.9"/></filter>
<filter id="vb3" x="-30%" y="-30%" width="160%" height="160%"><feGaussianBlur stdDeviation="2.2"/></filter>
<radialGradient id="vface" cx="0.6" cy="0.55" r="0.65"><stop offset="0" stop-color="#d0d0d0"/><stop offset="0.65" stop-color="#b2b2b2"/><stop offset="1" stop-color="#888"/></radialGradient>
<linearGradient id="vceil" x1="0" y1="0" x2="1" y2="0.5"><stop offset="0" stop-color="#4e4e4e"/><stop offset="1" stop-color="#727272"/></linearGradient>
<linearGradient id="vwall" x1="0" y1="0" x2="1" y2="0.4"><stop offset="0" stop-color="#3c3c3c"/><stop offset="0.5" stop-color="#4c4c4c"/><stop offset="1" stop-color="#585858"/></linearGradient>
<linearGradient id="vleft" x1="0" y1="0" x2="0.8" y2="1"><stop offset="0" stop-color="#272727"/><stop offset="0.5" stop-color="#393939"/><stop offset="1" stop-color="#444"/></linearGradient>
<linearGradient id="vwin" x1="0" y1="0" x2="0.6" y2="1"><stop offset="0" stop-color="#ececec"/><stop offset="1" stop-color="#c2c2c2"/></linearGradient>
<linearGradient id="vseat" x1="0" y1="0" x2="0" y2="1"><stop offset="0" stop-color="#989898"/><stop offset="0.3" stop-color="#808080"/><stop offset="1" stop-color="#747474"/></linearGradient>
</defs>
<rect x="299" y="144" width="176" height="138" fill="#383838"/>
<g filter="url(#vb)">
<rect x="295" y="146" width="110" height="92" fill="url(#vleft)"/>
<polygon points="295,146 320,146 318,154 295,153" fill="#262626"/>
<polygon points="317,147 378,147 376,153 352,165 340,170 318,161" fill="#4a4a4a"/>
<polygon points="398,163 420,160 440,146 478,146 478,203 456,213 413,234 400,236 398,200" fill="url(#vwall)"/>
<polygon points="364,146 442,146 420,160 400,171 397,163 388,160.5 372,157" fill="#242424"/>
<path d="M352 166 L387.5 160.5 L394 162 Q399 166 399.2 174 L399.2 185 L386 203.5 L364 216 L352 206 Z" fill="url(#vceil)"/>
<path d="M304.2 186.5 L308.9 180.3 L318.2 166.3 L329.1 160.1 L340 166.3 L341.5 172.5 L335.3 180.3 L333 189.7 L322.9 197.4 L315.1 192.8 L307.3 191.2 Z" fill="#7a7a7a"/>
<path d="M312 182 L322 172 L332 176 L326 190 L317 189 Z" fill="#8e8e8e"/>
<rect x="346.2" y="169.4" width="4.6" height="18.6" fill="#767676" transform="rotate(6 348.5 178)"/>
<ellipse cx="452" cy="169.5" rx="6.5" ry="13.5" fill="#686868"/>
<rect x="433.5" y="185.5" width="7.5" height="10.5" fill="#202020"/>
<rect x="435.5" y="198" width="8" height="13" fill="#1c1c1c" transform="rotate(-8 439 204)"/>
<circle cx="417.5" cy="155" r="1.1" fill="#151515"/><circle cx="423" cy="191.5" r="1.1" fill="#151515"/><circle cx="465" cy="168" r="1.3" fill="#151515"/>
<rect x="404.8" y="206.7" width="9.5" height="27" fill="#161616" transform="rotate(6 409 220)"/>
<polygon points="400,238 425,236 441,232 441,282 400,282" fill="#4a4a4a"/>
<polygon points="427.7,233 441,231 441,282 429,282" fill="#8e8e8e"/>
<path d="M407 238 L425 236.5 L428 262 L412 270 Z" fill="#9c9c9c"/>
<polygon points="408.5,236.8 413,233 456.5,212.6 478,201 478,230 463,231.5 456.5,238 456.5,282 441,282 441,233 425,236.8 410,241.5" fill="#111"/>
<path d="M478 228.4 L463 231 Q455.6 234 455.4 244 L455.4 282 L478 282 Z" fill="url(#vwin)"/>
<path d="M433 251 L410.5 279" stroke="#171717" stroke-width="6"/>
<rect x="295" y="255.9" width="26" height="26" fill="#454545"/>
<rect x="299" y="236.6" width="7" height="6.4" fill="#1a1a1a"/>
<polygon points="299,247.5 322,249.5 322,256.5 299,255.5" fill="#151515"/>
<path d="M322 282 L322.5 262 Q324 246 333 234 Q338 230.4 346 230.4 L358 231 Q365 232 365.3 240 L365.3 282 Z" fill="url(#vseat)"/>
<rect x="338" y="248" width="24" height="22" fill="#727272"/>
<polygon points="318,282 330,272.5 368,272 375,282" fill="#868686"/>
<ellipse cx="384.5" cy="240" rx="21" ry="28.5" fill="url(#vface)"/>
<ellipse cx="361.5" cy="242" rx="3.6" ry="9" fill="#b2b2b2"/>
<path d="M362 232 Q359 214 374 208.5 Q390 203.5 403 212.5 Q406 219 403.5 226.5 Q392 217.5 379 220.5 Q368 223.5 366.5 236 Z" fill="#303030"/>
<ellipse cx="378" cy="232.6" rx="5" ry="1.6" fill="#6a6a6a"/>
<ellipse cx="395.5" cy="234" rx="3.6" ry="1.6" fill="#6a6a6a"/>
<ellipse cx="389" cy="252" rx="3" ry="1.6" fill="#5a5a5a"/>
<path d="M366.5 282 L370 266 Q374 259.5 386 256.5 L399 250.5 Q407 251 408.5 259 L406.5 282 Z" fill="#b8b8b8"/>
<path d="M405 233.8 L398.8 252.6" stroke="#0e0e0e" stroke-width="3.2" stroke-linecap="round"/>
</g>
<rect x="299" y="144" width="176" height="4" fill="#040404"/>
<rect x="299" y="278.8" width="176" height="3.4" fill="#040404"/>
<rect x="473.6" y="144" width="1" height="138" fill="#0a0a0a"/>
</svg>
<svg style="left:302px;top:295.6px" width="6" height="9" viewBox="0 0 6 9"><path d="M4.8 0.8 L1.2 4.5 L4.8 8.2" fill="none" stroke="#2e5a34" stroke-width="1.1"/></svg>
<svg style="left:466px;top:295.6px" width="6" height="9" viewBox="0 0 6 9"><path d="M1.2 0.8 L4.8 4.5 L1.2 8.2" fill="none" stroke="#2e5a34" stroke-width="1.1"/></svg>
<div style="left:311.6px;top:285.1px;width:31.4px;height:29.5px;background:#6b6b6b;border:1.4px solid #4d8ff0;"></div>
<div style="left:322.3px;top:293.2px;width:10px;height:13px;border-radius:50%;background:#fff;"></div>
<svg style="left:325.6px;top:296.7px" width="5" height="6" viewBox="0 0 5 6"><polygon points="0,0 4.8,3 0,6" fill="#8a8a8a"/></svg>
<svg style="left:349.7px;top:285.2px" width="31.4" height="29.4" viewBox="0 0 250 235">
<defs><filter id="tb" x="-10%" y="-10%" width="120%" height="120%"><feGaussianBlur stdDeviation="4"/></filter><clipPath id="tc"><rect width="250" height="235"/></clipPath></defs>
<g clip-path="url(#tc)"><rect width="250" height="235" fill="#484848"/>
<g filter="url(#tb)">
<polygon points="0,20 120,30 150,60 60,130 0,120" fill="#666"/>
<polygon points="150,0 250,0 250,70 170,130 140,60" fill="#3a3a3a"/>
<polygon points="150,110 250,50 250,90 170,150" fill="#151515"/>
<polygon points="175,150 250,100 250,235 165,235" fill="#4a4a4a"/>
<rect x="5" y="105" width="75" height="130" rx="15" fill="#727272"/>
<ellipse cx="110" cy="135" rx="47" ry="76" fill="#a8a8a8"/>
<path d="M60 112 Q62 52 112 50 Q160 52 162 104 Q112 82 60 112 Z" fill="#303030"/>
<polygon points="30,235 65,212 170,212 205,235" fill="#666"/>
</g>
<rect x="0" y="0" width="250" height="6" fill="#151515"/><rect x="0" y="226" width="250" height="9" fill="#222"/>
</g></svg>
<div style="left:300px;top:319.7px;width:391px;height:0.7px;background:#dcdcdc;"></div>
<div class="btn" style="left:306.8px;border-color:#a9c9f8;"></div>
<svg style="left:311.6px;top:327.2px" width="13" height="13" viewBox="0 0 12 12"><path d="M3.2 1.2 C2.2 1.6 1.6 2.6 2 4 C2.8 6.6 5 9.2 7.6 10.4 C8.8 10.9 9.9 10.4 10.4 9.4 L8.6 7.6 L7.4 8.4 C6.2 7.8 4.8 6.2 4.2 5 L5.2 3.8 Z" fill="#2d7fe6"/></svg>
<div class="bl" style="left:300.9px;color:#4a96ec;">电话提醒</div>
<div class="btn" style="left:337.2px;border-color:#a9c9f8;"></div>
<svg style="left:342.0px;top:327.2px" width="13" height="13" viewBox="0 0 12 12"><ellipse cx="4.8" cy="4.6" rx="3.8" ry="3.2" fill="#2d7fe6"/><ellipse cx="8.2" cy="7.4" rx="3.2" ry="2.7" fill="#2d7fe6" stroke="#fff" stroke-width="0.6"/><circle cx="3.6" cy="4" r="0.5" fill="#fff"/><circle cx="6" cy="4" r="0.5" fill="#fff"/></svg>
<div class="bl" style="left:331.3px;color:#4a96ec;">微信提醒</div>
<div class="btn" style="left:368.0px;border-color:#a9c9f8;"></div>
<svg style="left:372.8px;top:327.2px" width="13" height="13" viewBox="0 0 12 12"><path d="M2 2 H10 V8.2 H6.6 L5 10 V8.2 H2 Z" fill="none" stroke="#2d7fe6" stroke-width="1.2" stroke-linejoin="round"/><path d="M4 4.2 H8 M4 6 H8" stroke="#2d7fe6" stroke-width="0.9"/></svg>
<div class="bl" style="left:362.1px;color:#4a96ec;">消息提醒</div>
<div class="btn" style="left:398.8px;border-color:#a9c9f8;"></div>
<svg style="left:403.6px;top:327.2px" width="13" height="13" viewBox="0 0 12 12"><ellipse cx="6" cy="5.8" rx="4.4" ry="3.8" fill="#2d7fe6"/><path d="M3 8 L2.4 10.6 L5.4 9.2 Z" fill="#2d7fe6"/><circle cx="4" cy="5.8" r="0.6" fill="#fff"/><circle cx="6" cy="5.8" r="0.6" fill="#fff"/><circle cx="8" cy="5.8" r="0.6" fill="#fff"/></svg>
<div class="bl" style="left:392.9px;color:#4a96ec;">短信提醒</div>
<div class="btn" style="left:429.4px;border-color:#f8d193;"></div>
<svg style="left:434.2px;top:327.2px" width="13" height="13" viewBox="0 0 12 12"><path d="M9.6 3.4 A4.4 4.4 0 1 0 10.4 6.4 H3.4" fill="none" stroke="#f5a623" stroke-width="0.8" stroke-linecap="round"/></svg>
<div class="bl" style="left:423.5px;color:#f3a530;">误报忽略</div>
<div class="t" style="left:482px;top:147px;font-size:9.5px;font-weight:bold;color:#111;line-height:11px;">分神驾驶</div>
<div class="dt" style="left:632px;top:145.6px;">报警分级:</div>
<svg style="left:666.8px;top:145.2px" width="7.2" height="9" viewBox="0 0 12 15"><path d="M6 0.2 L11.8 2.8 L11.2 7.6 C10.4 11 8.4 13.4 6 14.9 C3.6 13.4 1.6 11 0.8 7.6 L0.2 2.8 Z" fill="#ee6a10"/><rect x="5" y="3.2" width="2" height="5.2" rx="1" fill="#fff"/><circle cx="6" cy="10.6" r="1.1" fill="#fff"/></svg>
<div class="dt" style="left:676.6px;top:145.6px;color:#ee6a10;font-size:7.2px;">橙色</div>
<div class="dt" style="left:482.0px;top:163.3px;font-size:6.9px;">驾驶员:</div>
<div class="dt" style="left:512.0px;top:163.0px;font-size:7.6px;letter-spacing:0.00px;">DR4780</div>
<div class="dt" style="left:598.4px;top:163.3px;font-size:6.9px;">电话:</div>
<div class="dot" style="top:173.5px;"></div>
<div class="dt" style="left:482.0px;top:178.3px;font-size:6.9px;">报警时间:</div>
<div class="dt" style="left:518.0px;top:178.0px;font-size:7.6px;letter-spacing:0.22px;">2018-09-18 12:02:17</div>
<div class="dt" style="left:598.4px;top:178.3px;font-size:6.9px;">车速:</div>
<div class="dt" style="left:620.0px;top:178.0px;font-size:7.6px;letter-spacing:0.22px;">77<span style="position:static;font-size:7.6px;letter-spacing:0">公里/小时</span></div>
<div class="dot" style="top:188px;"></div>
<div class="dt" style="left:482.0px;top:193.0px;font-size:6.9px;">位置</div>
<div class="dt" style="left:501.5px;top:192.7px;font-size:7.6px;letter-spacing:0.10px;"><span style="position:static;font-size:7.5px;letter-spacing:0">安徽省马鞍山市当涂县</span>&gt;&gt;G4211(<span style="position:static;font-size:7.5px;letter-spacing:0">宁芜高速</span>)</div>
<div class="dot" style="top:202.5px;"></div>
<div class="dt" style="left:482px;top:207px;font-size:7.5px;">当日报警记录</div>
<div style="left:482px;top:218.6px;width:211.6px;height:13px;background:linear-gradient(#f7f7f7,#f0f0f0);border:0.6px solid #e6e6e6;"></div>
<div class="t c" style="left:496.6px;top:222.2px;width:90.6px;font-size:5.8px;line-height:6px;color:#333;">警报类型</div>
<div class="t c" style="left:587.2px;top:222.2px;width:48.0px;font-size:5.8px;line-height:6px;color:#333;">报警时间</div>
<div class="t c" style="left:635.2px;top:222.2px;width:46.6px;font-size:5.8px;line-height:6px;color:#333;">处理状态</div>
<div style="left:482px;top:231.6px;width:211.6px;height:77.6px;overflow:hidden;background:#fff;border-left:0.6px solid #dedede;">
<div class="r2" style="left:0;top:0.8px;">
<div class="cell" style="left:0;width:15px;background:#f5f5f5;border-right:0.6px solid #e8e8e8;font-size:6.3px;color:#444;line-height:15.6px;">4</div>
<div class="cell" style="left:14.6px;width:90.6px;">抽烟</div>
<div class="cell" style="left:105.2px;width:48.0px;font-size:6.4px;">12:13:24</div>
<div class="cell" style="left:153.2px;width:46.6px;">已自动处理</div>
</div>
<div class="r2" style="left:0;top:14.1px;">
<div class="cell" style="left:0;width:15px;background:#f5f5f5;border-right:0.6px solid #e8e8e8;font-size:6.3px;color:#444;line-height:15.6px;">5</div>
<div class="cell" style="left:14.6px;width:90.6px;">前向碰撞预警</div>
<div class="cell" style="left:105.2px;width:48.0px;font-size:6.4px;">12:12:20</div>
<div class="cell" style="left:153.2px;width:46.6px;">已自动处理</div>
</div>
<div class="r2" style="left:0;top:27.3px;">
<div class="cell" style="left:0;width:15px;background:#f5f5f5;border-right:0.6px solid #e8e8e8;font-size:6.3px;color:#444;line-height:15.6px;">6</div>
<div class="cell" style="left:14.6px;width:90.6px;">分神驾驶</div>
<div class="cell" style="left:105.2px;width:48.0px;font-size:6.4px;">12:04:17</div>
<div class="cell" style="left:153.2px;width:46.6px;">建议人工处理</div>
</div>
<div class="r2" style="left:0;top:40.5px;">
<div class="cell" style="left:0;width:15px;background:#f5f5f5;border-right:0.6px solid #e8e8e8;font-size:6.3px;color:#444;line-height:15.6px;">7</div>
<div class="cell" style="left:14.6px;width:90.6px;">分神驾驶</div>
<div class="cell" style="left:105.2px;width:48.0px;font-size:6.4px;">12:04:05</div>
<div class="cell" style="left:153.2px;width:46.6px;">已自动处理</div>
</div>
<div class="r2" style="left:0;top:53.8px;">
<div class="cell" style="left:0;width:15px;background:#f5f5f5;border-right:0.6px solid #e8e8e8;font-size:6.3px;color:#444;line-height:15.6px;">8</div>
<div class="cell" style="left:14.6px;width:90.6px;background:#fde08c;">分神驾驶</div>
<div class="cell" style="left:105.2px;width:48.0px;background:#fde08c;font-size:6.4px;">12:02:17</div>
<div class="cell" style="left:153.2px;width:46.6px;background:#fde08c;">建议人工处理</div>
</div>
<div class="r2" style="left:0;top:67.0px;">
<div class="cell" style="left:0;width:15px;background:#f5f5f5;border-right:0.6px solid #e8e8e8;font-size:6.3px;color:#444;line-height:15.6px;">9</div>
<div class="cell" style="left:14.6px;width:90.6px;">分神驾驶</div>
<div class="cell" style="left:105.2px;width:48.0px;font-size:6.4px;">11:58:03</div>
<div class="cell" style="left:153.2px;width:46.6px;">已自动处理</div>
</div>
<div style="left:105.2px;top:0;width:0.6px;height:80px;background:#e6e6e6;"></div><div style="left:153.2px;top:0;width:0.6px;height:80px;background:#e6e6e6;"></div>
<div style="left:199.8px;top:0;width:11px;height:80px;background:#fff;border-left:0.6px solid #e6e6e6;"></div>
<div style="left:202.6px;top:9.5px;width:5px;height:8.5px;background:#b9b9b9;"></div>
<svg style="left:203.1px;top:4px" width="4" height="3" viewBox="0 0 4 3"><polygon points="2,0.3 3.8,2.7 0.2,2.7" fill="#444"/></svg>
<svg style="left:203.1px;top:70.5px" width="4" height="3" viewBox="0 0 4 3"><polygon points="2,2.7 3.8,0.3 0.2,0.3" fill="#444"/></svg>
</div>
<div class="t" style="left:496.4px;top:328.4px;font-size:7.2px;font-weight:bold;color:#222;line-height:7px;">备注信息:</div>
<div class="t" style="left:611px;top:328.6px;font-size:6.3px;color:#2b8fdc;line-height:7px;">人工标记</div>
<div style="left:496.4px;top:338.1px;width:110.2px;height:11.4px;border:0.7px solid #9cc0ee;border-radius:2px;background:#fff;"></div>
<div style="left:611px;top:338.1px;width:47.6px;height:11.4px;border:0.7px solid #9cc0ee;border-radius:2.5px;background:linear-gradient(to right,#fff 0,#fff 79%,#e6f0fc 80%,#e6f0fc 100%);"></div>
<div class="t" style="left:613.6px;top:339.9px;font-size:6.4px;color:#222;line-height:7px;">看手机</div>
<svg style="left:649.6px;top:340.8px" width="7.2" height="6" viewBox="0 0 6 5"><path d="M0.8 1 L3 3.4 L5.2 1" fill="none" stroke="#4a90e2" stroke-width="0.9"/></svg>
<div style="left:661.2px;top:336.3px;width:28.6px;height:13.5px;border:0.7px solid #c2c2c2;border-radius:2.5px;background:linear-gradient(#fdfdfd,#ececec);"></div>
<svg style="left:664px;top:339px" width="8" height="8" viewBox="0 0 14 14"><rect x="0.5" y="0.5" width="13" height="13" rx="1" fill="#2d7fe6"/><rect x="3" y="1.5" width="8" height="5" fill="#fff"/><rect x="3.5" y="9" width="7" height="4.5" fill="#d9e8fb"/></svg>
<div class="t" style="left:674.4px;top:339.8px;font-size:6.3px;color:#333;line-height:7px;">保存</div>
<div class="wm" style="left:-219.5px;top:-74.3px;">金华东讯网络科技有限公司</div>
<div class="wm" style="left:-29.5px;top:-74.3px;">金华东讯网络科技有限公司</div>
<div class="wm" style="left:160.5px;top:-74.3px;">金华东讯网络科技有限公司</div>
<div class="wm" style="left:350.5px;top:-74.3px;">金华东讯网络科技有限公司</div>
<div class="wm" style="left:540.5px;top:-74.3px;">金华东讯网络科技有限公司</div>
<div class="wm" style="left:730.5px;top:-74.3px;">金华东讯网络科技有限公司</div>
<div class="wm" style="left:920.5px;top:-74.3px;">金华东讯网络科技有限公司</div>
<div class="wm" style="left:-219.5px;top:88.0px;">金华东讯网络科技有限公司</div>
<div class="wm" style="left:-29.5px;top:88.0px;">金华东讯网络科技有限公司</div>
<div class="wm" style="left:160.5px;top:88.0px;">金华东讯网络科技有限公司</div>
<div class="wm" style="left:350.5px;top:88.0px;">金华东讯网络科技有限公司</div>
<div class="wm" style="left:540.5px;top:88.0px;">金华东讯网络科技有限公司</div>
<div class="wm" style="left:730.5px;top:88.0px;">金华东讯网络科技有限公司</div>
<div class="wm" style="left:920.5px;top:88.0px;">金华东讯网络科技有限公司</div>
<div class="wm" style="left:-219.5px;top:250.3px;">金华东讯网络科技有限公司</div>
<div class="wm" style="left:-29.5px;top:250.3px;">金华东讯网络科技有限公司</div>
<div class="wm" style="left:160.5px;top:250.3px;">金华东讯网络科技有限公司</div>
<div class="wm" style="left:350.5px;top:250.3px;">金华东讯网络科技有限公司</div>
<div class="wm" style="left:540.5px;top:250.3px;">金华东讯网络科技有限公司</div>
<div class="wm" style="left:730.5px;top:250.3px;">金华东讯网络科技有限公司</div>
<div class="wm" style="left:920.5px;top:250.3px;">金华东讯网络科技有限公司</div>
<div class="wm" style="left:-219.5px;top:412.6px;">金华东讯网络科技有限公司</div>
<div class="wm" style="left:-29.5px;top:412.6px;">金华东讯网络科技有限公司</div>
<div class="wm" style="left:160.5px;top:412.6px;">金华东讯网络科技有限公司</div>
<div class="wm" style="left:350.5px;top:412.6px;">金华东讯网络科技有限公司</div>
<div class="wm" style="left:540.5px;top:412.6px;">金华东讯网络科技有限公司</div>
<div class="wm" style="left:730.5px;top:412.6px;">金华东讯网络科技有限公司</div>
<div class="wm" style="left:920.5px;top:412.6px;">金华东讯网络科技有限公司</div>
<div class="wm" style="left:-219.5px;top:574.9px;">金华东讯网络科技有限公司</div>
<div class="wm" style="left:-29.5px;top:574.9px;">金华东讯网络科技有限公司</div>
<div class="wm" style="left:160.5px;top:574.9px;">金华东讯网络科技有限公司</div>
<div class="wm" style="left:350.5px;top:574.9px;">金华东讯网络科技有限公司</div>
<div class="wm" style="left:540.5px;top:574.9px;">金华东讯网络科技有限公司</div>
<div class="wm" style="left:730.5px;top:574.9px;">金华东讯网络科技有限公司</div>
<div class="wm" style="left:920.5px;top:574.9px;">金华东讯网络科技有限公司</div>
</div></body></html>
